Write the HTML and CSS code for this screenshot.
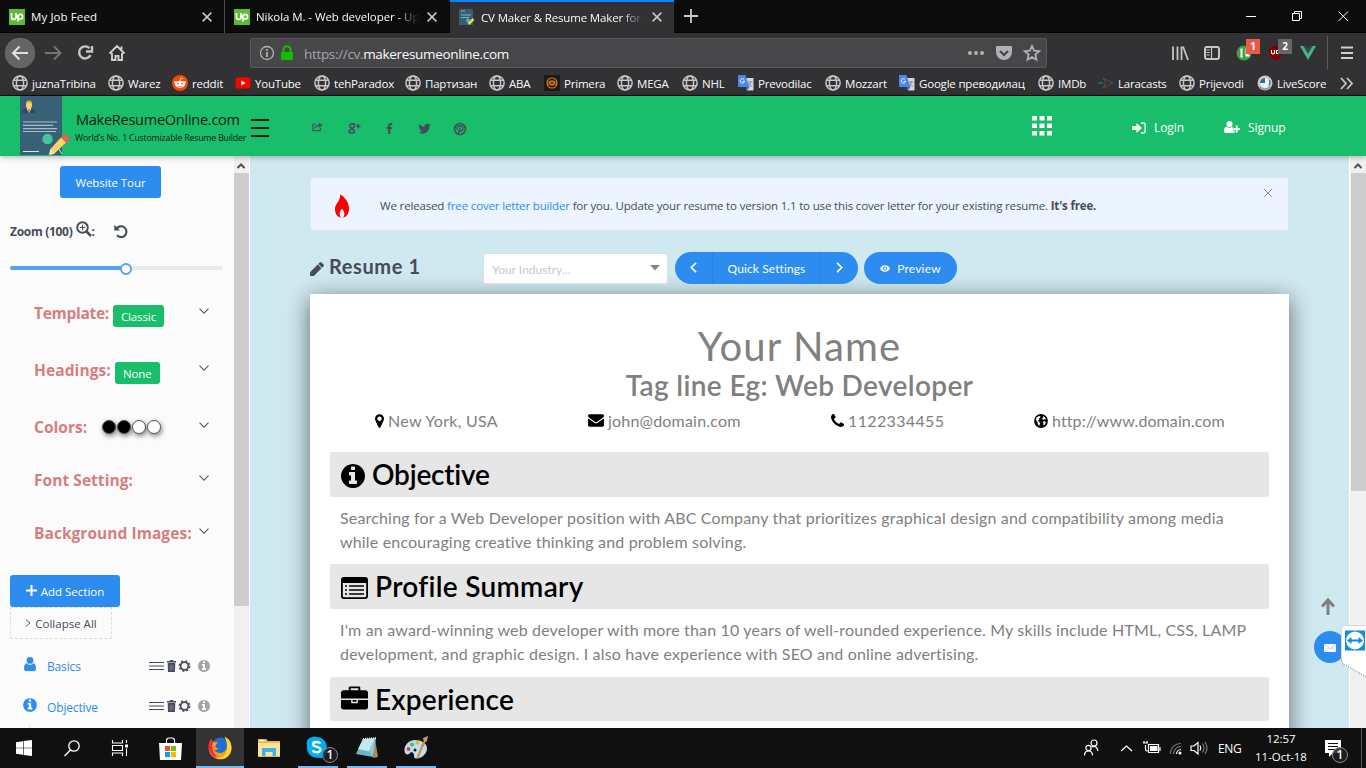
FILE: index.html
```html
<!DOCTYPE html>
<html lang="en">
<head>
<meta charset="utf-8">
<title>CV Maker &amp; Resume Maker</title>
<link rel="stylesheet" href="styles.css">
</head>
<body>
<svg class="defs" width="0" height="0">
  <symbol id="globe" viewBox="0 0 16 16"><g fill="none" stroke="#c6c6c7" stroke-width="1.5"><circle cx="8" cy="8" r="7.1"/><ellipse cx="8" cy="8" rx="3.6" ry="7.1"/><path d="M1.6 5.3h12.8M1.6 10.7h12.8"/></g></symbol>
  <symbol id="upwork" viewBox="0 0 16 16"><path fill="#5bbc2f" d="M0 0h16v16H0z"/><path d="M2.5 4v4.2a2.2 2.2 0 0 0 4.4 0V4M6.9 5c.5 2 1.300 3.200 2.300 4.500M9 12.500V7.600a2.300 2.300 0 1 1 2.300 2.400c-1 0-1.700-.3-2.300-1" fill="none" stroke="#fff" stroke-width="1.700"/></symbol>
  <symbol id="close" viewBox="0 0 10 10"><path d="M.6.6l8.800 8.800M9.400.6L.6 9.400" stroke="#c9c9ca" stroke-width="1.500"/></symbol>
  <symbol id="translate" viewBox="0 0 16 16"><path fill="#d5d7da" d="M6 3h9.500v12.500H9z"/><path fill="#4a86f0" d="M0 0h7.500l4 12H0z"/><path fill="#3467d6" d="M8 12h3.500L9 15.500z"/><path d="M6.200 4.600a2.200 2.200 0 1 0 .4 1.800H4.600" stroke="#fff" fill="none"/><path d="M10 7h4.500M12.300 6v1c0 2-1 3.500-2 4.500M11 8.500c.8 1.500 1.700 2.500 3 3" stroke="#7c8a94" fill="none" stroke-width=".9"/></symbol>
  <symbol id="info" viewBox="0 0 1792 1792"><path d="M1152 1376v-160q0-14-9-23t-23-9h-96v-512q0-14-9-23t-23-9h-320q-14 0-23 9t-9 23v160q0 14 9 23t23 9h96v320h-96q-14 0-23 9t-9 23v160q0 14 9 23t23 9h448q14 0 23-9t9-23zm-128-896v-160q0-14-9-23t-23-9h-192q-14 0-23 9t-9 23v160q0 14 9 23t23 9h192q14 0 23-9t9-23zm640 416q0 209-103 385.500t-279.500 279.500-385.500 103-385.500-103-279.500-279.500-103-385.500 103-385.500 279.500-279.500 385.500-103 385.500 103 279.500 279.500 103 385.500z"/></symbol>
  <symbol id="chev" viewBox="0 0 10 6"><path d="M.5.7L5 5.200 9.500.7" fill="none" stroke="#515a6e" stroke-width="1.100"/></symbol>
  <symbol id="user" viewBox="0 0 12 14"><circle cx="6" cy="3.400" r="3.400"/><path d="M2.600 6.200C.8 6.600 0 8.500 0 11.400 0 13 .9 14 2.300 14h7.400c1.400 0 2.300-1 2.300-2.600 0-2.900-.8-4.800-2.600-5.200C8.400 7.200 7.300 7.700 6 7.700S3.600 7.200 2.600 6.200z"/></symbol>
  <symbol id="tools" viewBox="0 0 42 12"><path d="M0 2.500h15M0 6h15M0 9.500h15" stroke="#464c5b"/><path fill="#464c5b" d="M18 2V1h2.500l.5-1h3l.5 1H27v1.600h-9zM18.700 3h7.600l-.4 9H19z"/><path d="M21 4.500v6M22.500 4.500v6M24 4.500v6" stroke="#8c909a" stroke-width=".6"/><circle cx="35.500" cy="6" r="3.900" fill="none" stroke="#464c5b" stroke-width="1.800"/><circle cx="35.500" cy="6" r="5.200" fill="none" stroke="#464c5b" stroke-width="1.400" stroke-dasharray="2 2.080"/></symbol>
</svg>

<header class="browser">
  <div class="tabs">
    <div class="tab"><svg class="fav"><use href="#upwork"/></svg><span class="tt t1">My Job Feed</span><svg class="x"><use href="#close"/></svg></div>
    <div class="tab"><svg class="fav"><use href="#upwork"/></svg><span class="tt t2">Nikola M. - Web developer - Up</span><svg class="x"><use href="#close"/></svg></div>
    <div class="tab active"><svg class="fav" viewBox="0 0 16 16"><path fill="#336079" d="M0 0h14v16H0z"/><path d="M2 2h4M2 6h10M2 8.500h8" stroke="#8fa7b5"/><circle cx="9" cy="11.500" r="2" fill="#3fc0a0"/><path d="M9.500 15l5-5" stroke="#fccf55" stroke-width="2.500"/></svg><span class="tt t3">CV Maker &amp; Resume Maker for</span><svg class="x"><use href="#close"/></svg></div>
    <svg class="plus" viewBox="0 0 14 14"><path d="M7 0v14M0 7h14" stroke="#c9c9ca" stroke-width="1.800"/></svg>
    <svg class="winbtns" viewBox="0 0 104 12"><g fill="none" stroke="#fff"><path d="M0 6.500h10M46.500 3.500h7v7h-7zM48.500 3.500v-2h7v7h-2M92.500 1.500l9.500 9.500M102 1.500L92.500 11"/></g></svg>
  </div>
  <div class="toolbar">
    <svg class="nav" viewBox="0 0 130 34"><circle cx="20" cy="17" r="16" fill="#656566" stroke="#2a2a2c"/><g fill="none" stroke-width="2"><path d="M28 17H13.500M19.500 10.500L13 17l6.500 6.500" stroke="#e1e1e2"/><path d="M45 17h14.500M54 10.500l6.500 6.500-6.500 6.500" stroke="#747476"/><path d="M89.500 12.300a6 6 0 1 0 1 6.800M92 10v5.500h-6" stroke="#c6c6c7" stroke-width="2.400"/><path d="M109.500 17.500L117 10l7.500 7.500M112 17v7h3.500v-4h3v4h3.500v-7M121.500 10.500v3" stroke="#d0d0d1" stroke-width="1.900"/></g></svg>
    <div class="url">
      <svg class="lock" viewBox="0 0 36 16"><circle cx="8" cy="8" r="6.500" fill="none" stroke="#b1b1b3" stroke-width="1.300"/><path d="M8 7v5M8 4v1.700" stroke="#b1b1b3" stroke-width="1.700"/><path fill="#12bc00" d="M22 7h12v8H22z"/><path d="M24.500 8V4.700a3.500 3.500 0 0 1 7 0V8" fill="none" stroke="#12bc00" stroke-width="2"/></svg>
      <span class="addr"><i>https://cv.</i>makeresumeonline.com</span>
      <svg class="acts" viewBox="0 0 74 18"><g fill="#b1b1b3"><circle cx="3" cy="9" r="2"/><circle cx="9" cy="9" r="2"/><circle cx="15" cy="9" r="2"/><path d="M30 2h14q1 0 1 1v5a8 8 0 0 1-16 0V3q0-1 1-1z"/></g><path d="M33 7l4 4 4-4" stroke="#474749" stroke-width="2.200" fill="none"/><path d="M65 2l2.100 4.700 5.100.5-3.800 3.400 1.100 5.100L65 13l-4.500 2.700 1.100-5.100-3.800-3.400 5.100-.5z" fill="none" stroke="#b1b1b3" stroke-width="1.800"/></svg>
    </div>
    <svg class="ext" viewBox="0 0 190 34"><g stroke="#c6c6c7" fill="none"><path d="M2 10.500V24M6.500 10.500V24M10.500 10.500V24M12 10.500L17 24" stroke-width="1.800"/><rect x="34" y="11" width="14" height="12" rx="2" stroke-width="2"/><path d="M40.500 11v12M35.500 14h3M35.500 16.500h3M35.500 19h3" stroke-width="1.200"/></g><circle cx="73" cy="17" r="7.500" fill="#43a047"/><path d="M70.500 12.500v9M75.500 12.500v7h3" stroke="#fff" stroke-width="2" fill="none"/><path d="M98 12l6.500-2.500L111 12v5c0 3-3 5.500-6.500 7.500C101 22.500 98 20 98 17z" fill="#800000"/><path d="M100.500 14v3q1.500 2 3 0v-3M108 14.500h-2.500v3H108" stroke="#fff" fill="none" stroke-width="1.100"/><path d="M129 10h3.500l4.500 7.500 4.500-7.500h3.500L137 24z" fill="#41b883"/><path d="M132.500 10h3l1.500 3 1.500-3h3L137 17.500z" fill="#35495e"/><path d="M156.500 0v34" stroke="#5a5a5c"/><path d="M170 11.500h12M170 17h12M170 22h12" stroke="#d0d0d1" stroke-width="2"/></svg>
    <b class="bdg red">1</b><b class="bdg gray">2</b>
  </div>
  <nav class="marks">
    <a><svg><use href="#globe"/></svg>juznaTribina</a>
    <a><svg><use href="#globe"/></svg>Warez</a>
    <a><svg viewBox="0 0 16 16"><circle cx="8" cy="8" r="8" fill="#ff4500"/><ellipse cx="8" cy="9.300" rx="5" ry="3.600" fill="#fff"/><circle cx="3.500" cy="7.500" r="1.400" fill="#fff"/><circle cx="12.500" cy="7.500" r="1.400" fill="#fff"/><circle cx="6" cy="8.600" r=".9" fill="#ff4500"/><circle cx="10" cy="8.600" r=".9" fill="#ff4500"/><path d="M6 11q2 1.200 4 0" stroke="#ff4500" fill="none" stroke-width=".7"/><path d="M8 6l.7-3 2.500.6" stroke="#fff" fill="none" stroke-width=".8"/></svg>reddit</a>
    <a><svg viewBox="0 0 16 16"><rect x=".5" y="2.500" width="15" height="11" rx="2.500" fill="#f00"/><path fill="#fff" d="M6.300 5.500v5l4.200-2.500z"/></svg>YouTube</a>
    <a><svg><use href="#globe"/></svg>tehParadox</a>
    <a><svg><use href="#globe"/></svg>Партизан</a>
    <a><svg><use href="#globe"/></svg>ABA</a>
    <a><svg viewBox="0 0 16 16"><path fill="#1b1b1c" d="M0 0h16v16H0z"/><g fill="none" stroke="#e07b15" stroke-width="1.100"><circle cx="8" cy="8" r="5"/><circle cx="8" cy="8" r="2.200"/><path d="M3 7h10M3 9.300h10"/></g></svg>Primera</a>
    <a><svg><use href="#globe"/></svg>MEGA</a>
    <a><svg><use href="#globe"/></svg>NHL</a>
    <a><svg><use href="#translate"/></svg>Prevodilac</a>
    <a><svg><use href="#globe"/></svg>Mozzart</a>
    <a><svg><use href="#translate"/></svg>Google преводилац</a>
    <a><svg><use href="#globe"/></svg>IMDb</a>
    <a><svg viewBox="0 0 16 16"><path d="M0 8h5" stroke="#14746f" stroke-width="1.500"/><path d="M5 3l10 5-10 5 3-5z" fill="none" stroke="#515153"/></svg>Laracasts</a>
    <a><svg><use href="#globe"/></svg>Prijevodi</a>
    <a><svg viewBox="0 0 16 16"><circle cx="8" cy="8" r="7.500" fill="#c3c8ca"/><circle cx="8" cy="8" r="5" fill="#eef1f2"/><path fill="#2d6f97" d="M8 8V3a5 5 0 0 0-5 5z"/><path d="M3 12a6.500 6.500 0 0 0 10.500-1" stroke="#777" fill="none"/><path d="M12.500 5q1 3-.5 5.500" stroke="#3a7fa5" fill="none" stroke-width="1.500"/></svg>LiveScore</a>
    <svg class="more" viewBox="0 0 13 13"><path d="M1 1l5 5.500L1 12M7 1l5 5.500L7 12" stroke="#c6c6c7" stroke-width="1.800" fill="none"/></svg>
  </nav>
</header>

<div class="sitebar">
  <svg class="logo" viewBox="0 0 52 60"><path fill="#386178" d="M0 0h42v59H0z"/><path fill="#2b4c62" d="M2 17c0-4 3-5 6.500-5s6.500 1 6.500 5z"/><ellipse cx="9" cy="9" rx="3" ry="4" fill="#fcd462"/><path d="M6 8q-.5-3.500 3-3.500T12 8L9 6.500z" fill="#e8a63c"/><path d="M6.500 12.500l2.500 4.500 2.500-4.500z" fill="#e3dfd0"/><path d="M9 13l-1 1 1 3 1-3z" fill="#d9534f"/><path d="M3 26h34M3 29.300h30M3 32.600h34M3 35.500h33" stroke="#a9bcc7" stroke-width="1.200"/><circle cx="27.500" cy="43" r="5.200" fill="#44c4a1"/><path d="M3 55.500h16" stroke="#dfe6ea"/><path d="M29 59l1.500-6L41 41.500l5 5L34 58z" fill="#fcd462"/><path d="M41 41.500l3.500-4 6 5.500-4 4z" fill="#e56353"/><path d="M29 59l1.500-6 4 4.500z" fill="#f3e4c4"/><path d="M38 52l4 6" stroke="#d9e2e6"/></svg>
  <div class="brand"><b>MakeResumeOnline.com</b><small>World's No. 1 Customizable Resume Builder</small></div>
  <svg class="burger" viewBox="0 0 18 18"><path d="M0 1h18M0 9h18M0 17h18" stroke="#0b1a12" stroke-width="2"/></svg>
  <div class="social">
    <svg viewBox="0 0 12 12"><path d="M4 3H1v7h8V7M3.500 7.500Q4 4 8.500 4" fill="none" stroke="#464c5b" stroke-width="1.300"/><path fill="#464c5b" d="M7.500 1L11.500 4 7.500 7z"/></svg>
    <svg viewBox="0 0 14 12"><g fill="none" stroke="#464c5b" stroke-width="1.600"><ellipse cx="4.300" cy="3.200" rx="2.500" ry="2.200"/><ellipse cx="4" cy="9" rx="3" ry="2"/><path d="M4.500 1H8M4 5.500l2 2M8.500 3.500h5M11 1v5"/></g></svg>
    <svg viewBox="0 0 7 12"><path fill="#464c5b" d="M2 12V6.500H.3V4.300H2V3C2 1 3.200 0 4.800 0h1.700v2.200H5.300c-.7 0-.9.400-.9 1v1.100h2.100L6.200 6.500H4.400V12z"/></svg>
    <svg viewBox="60 200 1660 1350"><path fill="#464c5b" d="M1684 408q-67 98-162 167 1 14 1 42 0 130-38 259.500t-115.500 248.500-184.500 210.500-258 146-323 54.500q-271 0-496-145 35 4 78 4 225 0 401-138-105-2-188-64.500t-114-159.500q33 5 61 5 43 0 85-11-112-23-185.500-111.500t-73.500-205.500v-4q68 38 146 41-66-44-105-115t-39-154q0-88 44-163 121 149 294.500 238.500t371.500 99.500q-8-38-8-74 0-134 94.500-228.500t228.500-94.500q140 0 236 102 109-21 205-78-37 115-142 178 93-10 186-50z"/></svg>
    <svg viewBox="0 0 14 14"><g fill="none" stroke="#464c5b" stroke-width="1.700"><circle cx="7" cy="7" r="5.500"/><path d="M5.200 12.300L7.200 5.500M4.600 8C3 5.500 5 3.700 7.200 3.700c2.300 0 3.200 1.600 2.700 3.300-.5 2.200-2.700 2.600-3.300 1.300" stroke-width="1.400"/></g></svg>
  </div>
  <svg class="apps" viewBox="0 0 20 20"><path fill="#fff" d="M0 0h5v4.500H0zM7.500 0h5v4.500h-5zM15 0h5v4.500h-5zM0 7.500h5V12H0zM7.500 7.500h5V12h-5zM15 7.500h5V12h-5zM0 15h5v4.500H0zM7.500 15h5v4.500h-5zM15 15h5v4.500h-5z"/></svg>
  <a class="login"><svg viewBox="0 0 14 12"><path fill="#fff" d="M0 4h4.500V1L9.800 6l-5.300 5V8H0z"/><path d="M9 1h2.500Q13.200 1 13.200 2.700v6.600Q13.200 11 11.500 11H9" fill="none" stroke="#fff" stroke-width="1.400"/></svg>Login</a>
  <a class="signup"><svg viewBox="0 0 16 12"><g fill="#fff"><circle cx="5.500" cy="3" r="3"/><path d="M2.500 5.500C.8 6 0 7.500 0 9.700 0 11.200.8 12 2 12h7.500q1.200 0 1.200-.8V9.500H9V7q-.2-1-1-1.500Q7 6.700 5.500 6.700t-3-1.200z"/></g><path d="M12.700 4.500v7M9.500 8h6.500" stroke="#fff" stroke-width="1.900"/></svg>Signup</a>
</div>

<div class="body">
  <aside class="side">
    <div class="btn tour">Website Tour</div>
    <div class="zoom"><b>Zoom (100)</b><svg class="mag" viewBox="0 0 16 16"><circle cx="6.500" cy="6.500" r="5.300" fill="none" stroke="#464c5b" stroke-width="1.900"/><path d="M10.500 10.500l4.500 4.500" stroke="#464c5b" stroke-width="2.500"/><path d="M6.500 3.700v5.600M3.700 6.500h5.600" stroke="#464c5b"/></svg><b>:</b><svg class="undo" viewBox="0 0 14 14"><path d="M2.500 4.800A5.400 5.400 0 1 1 3 11.300" fill="none" stroke="#464c5b" stroke-width="2.100"/><path fill="#464c5b" d="M.3.800v5.700H6z"/></svg></div>
    <div class="slider"><div class="fill"></div><div class="knob"></div></div>
    <div class="opt o1"><h4>Template:</h4><span class="tag">Classic</span><svg class="dn"><use href="#chev"/></svg></div>
    <div class="opt o2"><h4>Headings:</h4><span class="tag">None</span><svg class="dn"><use href="#chev"/></svg></div>
    <div class="opt o3"><h4>Colors:</h4><span class="dots"><i></i><i></i><i class="w"></i><i class="w"></i></span><svg class="dn"><use href="#chev"/></svg></div>
    <div class="opt o4"><h4>Font Setting:</h4><svg class="dn"><use href="#chev"/></svg></div>
    <div class="opt o5"><h4>Background Images:</h4><svg class="dn"><use href="#chev"/></svg></div>
    <div class="btn add"><svg viewBox="0 0 11 11"><path d="M5.500 0v11M0 5.500h11" stroke="#fff" stroke-width="2"/></svg>Add Section</div>
    <div class="collapse"><svg viewBox="0 0 6 8"><path d="M.8.500L5 4 .8 7.500" fill="none" stroke="#515a6e"/></svg>Collapse All</div>
    <div class="sec first"><svg class="ic u"><use href="#user"/></svg><span>Basics</span><svg class="tools"><use href="#tools"/></svg><svg class="gi"><use href="#info"/></svg></div>
    <div class="sec"><svg class="ic"><use href="#info"/></svg><span>Objective</span><svg class="tools"><use href="#tools"/></svg><svg class="gi"><use href="#info"/></svg></div>
    <div class="tail"></div>
  </aside>
  <div class="scroll s-left"><svg viewBox="0 0 8 6"><path d="M.5 5L4 1.500 7.500 5" fill="none" stroke="#505050" stroke-width="2"/></svg><div class="thumb"></div></div>

  <main class="content">
    <div class="notice">
      <svg class="fire" viewBox="0 0 15 25"><path fill="#f00" d="M5.700 0C11 3.500 15 9 15 15.500c0 5-2.500 9-7 9.500 1.700-1 2-2.500 2-4 0-2.500-1.200-4-2.500-5.500C6 17 5 18.500 5 21c0 1.500.5 3 2 4-4.500-.5-7-4-7-9.500C0 10.500 5.500 8 5.700 0z"/></svg>
      <p>We released <a>free cover letter builder</a> for you. Update your resume to version 1.1 to use this cover letter for your existing resume. <b>It's free.</b></p>
      <svg class="nx" viewBox="0 0 10 10"><path d="M1 1l8 8M9 1L1 9" stroke="#8a919c"/></svg>
    </div>
    <div class="bar">
      <svg class="pen" viewBox="120 256 1530 1410"><path fill="#464c5b" d="M960 416l416 416-832 832h-416v-416zM1643 512q0 53-37 90l-166 166-416-416 166-165q36-38 90-38 53 0 91 38l235 234q37 39 37 91z"/></svg>
      <h2>Resume 1</h2>
      <div class="select"><span>Your Industry...</span><svg viewBox="0 0 10 6"><path fill="#808695" d="M0 0h10L5 5.500z"/></svg></div>
      <div class="group"><span class="g1"><svg viewBox="0 0 7 11"><path d="M6 .8L1.300 5.500 6 10.200" fill="none" stroke="#fff" stroke-width="1.700"/></svg></span><span class="g2">Quick Settings</span><span class="g1"><svg viewBox="0 0 7 11"><path d="M1 .8l4.700 4.700L1 10.200" fill="none" stroke="#fff" stroke-width="1.700"/></svg></span></div>
      <div class="preview"><svg viewBox="0 0 11 7"><path fill="#fff" fill-rule="evenodd" d="M0 3.500Q2 0 5.500 0T11 3.500Q9 7 5.500 7T0 3.500zm3.200 0a2.300 2.300 0 1 0 4.600 0 2.300 2.300 0 1 0-4.600 0z"/><circle cx="5.500" cy="3.500" r="1.200" fill="#fff"/></svg>Preview</div>
    </div>
    <article class="paper">
      <h1>Your Name</h1>
      <h3>Tag line Eg: Web Developer</h3>
      <div class="contacts">
        <span class="c1"><svg viewBox="384 128 1024 1536"><path d="M1152 640q0-106-75-181t-181-75-181 75-75 181 75 181 181 75 181-75 75-181zm256 0q0 109-33 179l-364 774q-16 33-47.500 52t-67.500 19-67.500-19-46.500-52l-365-774q-33-70-33-179 0-212 150-362t362-150 362 150 150 362z"/></svg><em>New York, USA</em></span>
        <span class="c2"><svg viewBox="0 256 1792 1408"><path d="M1792 710v794q0 66-47 113t-113 47h-1472q-66 0-113-47t-47-113v-794q44 49 101 87 362 246 497 345 57 42 92.500 65.500t94.500 48 110 24.500h2q51 0 110-24.500t94.500-48 92.500-65.500q170-123 498-345 57-39 100-87zm0-294q0 79-49 151t-122 123q-376 261-468 325-10 7-42.500 31t-54 38.500-52 32.500-57.500 27-50 9h-2q-23 0-50-9t-57.500-27-52-32.500-54-38.500-42.500-31q-91-64-262-182.500t-205-142.500q-62-42-117-115.500t-55-136.500q0-78 41.500-130t118.500-52h1472q65 0 112.500 47t47.500 113z"/></svg><em>john@domain.com</em></span>
        <span class="c3"><svg viewBox="192 128 1408 1408"><path d="M1600 1240q0 27-10 70.500t-21 68.500q-21 50-122 106-94 51-186 51-27 0-53-3.500t-57.500-12.500-47-14.500-55.500-20.500-49-18q-98-35-175-83-127-79-264-216t-216-264q-48-77-83-175-3-9-18-49t-20.500-55.500-14.500-47-12.500-57.500-3.500-53q0-92 51-186 56-101 106-122 25-11 68.500-21t70.500-10q14 0 21 3 18 6 53 76 11 19 30 54t35 63.500 31 53.500q3 4 17.500 25t21.500 35.500 7 28.500q0 20-28.500 50t-62 55-62 53-28.500 46q0 9 5 22.500t8.500 20.500 14 24 11.500 19q76 137 174 235t235 174q2 1 19 11.500t24 14 20.500 8.500 22.500 5q18 0 46-28.500t53-62 55-62 50-28.500q14 0 28.500 7t35.500 21.500 25 17.500q25 15 53.500 31t63.500 35 54 30q70 35 76 53 3 7 3 21z"/></svg><em>1122334455</em></span>
        <span class="c4"><svg viewBox="0 0 14 14"><circle cx="7" cy="7" r="6.900"/><path fill="#fff" d="M2.500 3.500L5 2l1.500.5L6 4l-1.200.5.500 1-1.300 1 1.500 1.500.5 1.500-.8 2.500L3.700 10l-.2-2L2 6zM9 2l2 1.200 1 2.300-1.500-.2-1.500.5L8 4.500l1.200-.8zM9 7.500l2-.3.8 1.300-1 2.200-1.300.8-.2-2z"/></svg><em>http://www.domain.com</em></span>
      </div>
      <div class="head"><svg class="hi"><use href="#info"/></svg><span class="k1">Objective</span></div>
      <p class="txt"><span>Searching for a Web Developer position with ABC Company that prioritizes graphical design and compatibility among media</span><span>while encouraging creative thinking and problem solving.</span></p>
      <div class="head"><svg class="list" viewBox="0 0 27 22"><rect x=".9" y=".9" width="25.200" height="20.200" rx="2" fill="none" stroke="#000" stroke-width="1.800"/><path d="M1 1h25v5H1z"/><path d="M4 9h2M8 9h15M4 13h2M8 13h15M4 17h2M8 17h15" stroke="#000" stroke-width="1.600"/></svg><span class="k2">Profile Summary</span></div>
      <p class="txt"><span>I'm an award-winning web developer with more than 10 years of well-rounded experience. My skills include HTML, CSS, LAMP</span><span>development, and graphic design. I also have experience with SEO and online advertising.</span></p>
      <div class="head last"><svg class="case" viewBox="0 0 1792 1536"><path d="M640 256h512v-128h-512v128zm1152 640v480q0 66-47 113t-113 47h-1472q-66 0-113-47t-47-113v-480h672v160q0 26 19 45t45 19h320q26 0 45-19t19-45v-160h672zm-768 0v128h-256v-128h256zm768-480v384h-1792v-384q0-66 47-113t113-47h352v-160q0-40 28-68t68-28h576q40 0 68 28t28 68v160h352q66 0 113 47t47 113z"/></svg><span class="k3">Experience</span></div>
    </article>
  </main>
  <div class="scroll s-right"><svg viewBox="0 0 8 6"><path d="M.5 5L4 1.500 7.500 5" fill="none" stroke="#505050" stroke-width="2"/></svg><div class="thumb"></div></div>
</div>

<svg class="totop" viewBox="0 0 14 18"><path d="M7 17V3M1 8.500l6-6.500 6 6.500" fill="none" stroke="#808080" stroke-width="3"/></svg>
<div class="chat"><svg viewBox="0 0 12 8"><path fill="#fff" d="M0 0h12v8H0z"/><path d="M.5.500L6 5 11.500.500M.5 7.500l4-3.500M11.500 7.500l-4-3.500" fill="none" stroke="#9fc4ee" stroke-width=".8"/></svg></div>
<svg class="viewer" viewBox="0 0 25 52"><path d="M25 .5H4Q.5.500.5 4v33l4 4L25 52z" fill="#fff"/><path d="M25 .5H4Q.5.500.5 4v31" fill="none" stroke="#d5d8da"/><path d="M.5 35q0 4 4 5L25 52" fill="none" stroke="#555" stroke-dasharray="1 1.500"/><rect x="4" y="5.500" width="20" height="20" fill="#0e8ee9"/><circle cx="14" cy="15.500" r="9" fill="#fff"/><path fill="#0e8ee9" d="M6 15.500l4.500-3.500v2.500h7V12l4.500 3.500-4.500 3.500v-2.500h-7V19z"/></svg>

<footer class="taskbar">
  <span class="tk"><svg width="16" height="16" viewBox="0 0 16 16"><path fill="#fff" d="M0 2.300L7 1.200v6.500H0zM7.600 1.100L16 0v7.700H7.600zM0 8.300h7v6.500l-7-1zM7.600 8.300H16V16l-8.400-1.100z"/></svg></span>
  <span class="tk"><svg width="16" height="17" viewBox="0 0 16 17"><circle cx="10" cy="6" r="5.200" fill="none" stroke="#fff" stroke-width="1.300"/><path d="M6.500 10L.5 16" stroke="#fff" stroke-width="1.500"/></svg></span>
  <span class="tk"><svg width="16" height="16" viewBox="0 0 16 16"><path d="M.5 0v3h10V0M.5 16v-3h10v3M.5 5.500h10v5H.5zM14.500 0v3M14.500 8.500V16" fill="none" stroke="#fff" stroke-width="1.100"/><path fill="#fff" d="M13 4.500h3v3h-3z"/></svg></span>
  <span class="tk tw"><svg width="23" height="23" viewBox="0 0 23 23"><path d="M7.500 7V3.500Q7.500 1 10 1h3q2.500 0 2.500 2.500V7" fill="none" stroke="#fff" stroke-width="1.200"/><path fill="#fff" d="M0 6h23l-1 17H1z"/><path fill="#f25022" d="M6 9h5v5H6z"/><path fill="#7fba00" d="M12 9h5v5h-5z"/><path fill="#00a4ef" d="M6 15h5v5H6z"/><path fill="#ffb900" d="M12 15h5v5h-5z"/></svg></span>
  <span class="tk run on"><svg width="24" height="24" viewBox="0 0 24 24"><path fill="#ff5a36" d="M3 3q1 2 3 2.500Q9 2 12 2l10 4q3 7 0 12-4 5.500-10 5.500T2 18Q-1.500 10 3 3z"/><circle cx="12.500" cy="9.500" r="8" fill="#1b6fd6"/><path fill="#ffd62b" d="M16.500.5q7 3.500 7 11 0 8-7 11-5 1.500-9-1 8 0 10.500-6Q20.500 8 16.500.5z"/><path fill="#f5263f" d="M3 3q1 2 3 2.500l4 1-2.500 3Q7 12 10 12.500 8 14.500 6 14q2 4 7 3.500-3 4-8 2Q-2 12.500 3 3z"/><path fill="#ff9a1f" d="M5 6l5 .5-2.500 3Q7 12 10.500 12.500 8.500 14.500 6 14q2.500 3.500 7 3 4.500-1 5.500-5 .5 7-6 9-6-.5-8-7-1-5 .5-8z"/></svg></span>
  <span class="tk"><svg width="22" height="20" viewBox="0 0 22 20"><path fill="#e8b849" d="M0 1h8l2 2h12v16H0z"/><path fill="#fde397" d="M0 5h22v13H0z"/><path fill="#3db2e8" d="M4 10h14v8h-3.500v-4h-7v4H4z"/><path fill="#fff" d="M1.500 2h5v1.200h-5z"/></svg></span>
  <span class="tk run"><svg class="skype" width="32" height="28" viewBox="0 0 32 28"><path fill="#00aff0" d="M7 1a6 6 0 0 1 5 0 10 10 0 0 1 9.500 12A6 6 0 0 1 14 21.500 10 10 0 0 1 2 10Q0 3 7 1z"/><path d="M15.500 7.500Q14 6 11.500 6 8 6 8 8.300c0 3.200 7.500 1.700 7.500 5 0 2.500-2 3-4 3Q9 16.300 7.500 14.500" fill="none" stroke="#fff" stroke-width="2.300"/></svg><b class="cnt c-sk">1</b></span>
  <span class="tk run"><svg width="24" height="24" viewBox="0 0 24 24"><path fill="#b5854b" d="M20 3l3 18-5 1z"/><path fill="#6fb4c4" d="M8 3l13-1-3 19L1 18z"/><path fill="#c3e8ee" d="M8 3l12-.7-6 13L3 13z"/><path fill="#8fc9d4" d="M20 2.300L18 21l-4-6z"/><path d="M8 3l13-1" stroke="#ddd" stroke-dasharray="1 1" stroke-width="2"/></svg></span>
  <span class="tk run"><svg width="24" height="24" viewBox="0 0 24 24"><path fill="#b9dff5" d="M11 4C5 4 0 9 .5 15c.5 4 4 4 5 2.500s3-2 4 0S9 22 12 22.500c6 0 11-5 11-10C23 7 17 4 11 4z"/><circle cx="4.500" cy="13" r="1.900" fill="#e33b2e"/><circle cx="8" cy="8.500" r="2" fill="#55b948"/><circle cx="13.500" cy="6.500" r="2.100" fill="#f7b51c"/><circle cx="19" cy="9" r="1.500" fill="#6f94d8"/><circle cx="11" cy="14" r="1.500" fill="#122"/><path d="M13.500 22L20 6" stroke="#e58a2c" stroke-width="2"/><path d="M20 7l-1-5 5-2-1 5z" fill="#c79868"/></svg></span>
  <div class="tray">
    <svg viewBox="0 0 124 20"><g fill="none" stroke="#fff" stroke-width="1.200"><circle cx="10" cy="5" r="3"/><circle cx="4.500" cy="10" r="2.600"/><path d="M.5 17.500q0-4.500 4-4.500t4 4.500M7.500 9q5-2.500 6.500 4"/><path d="M37 13l5.500-5L48 13"/><path d="M64.500 6.500h10v8h-10zM76 9v4M59 5h5M60 3v2M63 3v2M61.500 7v4q0 2 2 2"/></g><path fill="#fff" d="M66 8h7.500v5H66z"/><g fill="none" stroke="#77777a" stroke-width="1.200"><path d="M86.500 16A10 10 0 0 1 97 5.500M89.500 16A7.500 7.500 0 0 1 97 8.500"/><path stroke="#fff" d="M92.500 16a4.700 4.700 0 0 1 4.500-4.500"/><path stroke="#fff" d="M107 8v4.500h3l4 3.500V4.500L110 8zM116 7.500q1.500 2.500 0 5"/><path d="M118.500 5.500q3 4.500 0 9M121 4q4 6 0 12"/></g><circle cx="96" cy="15" r="1.500" fill="#fff"/></svg>
    <span class="lang">ENG</span>
    <div class="clock"><span>12:57</span><span>11-Oct-18</span></div>
    <span class="act"><svg viewBox="0 0 16 17"><path fill="#fff" d="M0 0h16v13H8l-4 4v-4H0z"/><path d="M3 3.500h10M3 6.500h10M3 9.500h7" stroke="#101010"/></svg><b class="cnt c-ac">1</b></span>
    <i class="peek"></i>
  </div>
</footer>
</body>
</html>
```
FILE: styles.css
```css
* { box-sizing: border-box; }
body { margin: 0; width: 1366px; height: 768px; overflow: hidden; position: relative; display: flex; flex-direction: column; font-family: "Open Sans", "Noto Sans", sans-serif; font-size: 12px; color: #464c5b; }
svg { display: block; flex: none; overflow: visible; }
.defs { position: absolute; }
h1, h2, h3, h4, p { margin: 0; font-weight: 400; }
i, em { font-style: normal; }
span, a, h1, h2, h3, h4 { white-space: nowrap; }

/* browser window */
.browser { height: 96px; flex: none; background: #323234; color: #f9f9fa; border-bottom: 1px solid #0c0c0d; }
.tabs { height: 33px; display: flex; background: #0c0c0d; position: relative; align-items: center; border-bottom: 1px solid #050505; }
.tab { width: 225px; height: 33px; display: flex; align-items: center; padding: 1px 12px 0 9px; border-right: 1px solid #4a4a4c; }
.tab:nth-child(2) { border-right-color: #0c0c0d; }
.tab.active { background: #323234; border-top: 2px solid #0a84ff; border-right: 0; width: 224px; padding-top: 0; }
.fav { width: 16px; height: 16px; margin-right: 6px; }
.tt { flex: 1; overflow: hidden; font-size: 11.500px; margin-right: 8px; }
.t1 { letter-spacing: 0.1px; }
.t2, .t3 { letter-spacing: -0.08px; -webkit-mask-image: linear-gradient(90deg, #000 86%, transparent); mask-image: linear-gradient(90deg, #000 86%, transparent); }
.t3 { letter-spacing: -0.15px; }
.x { width: 10px; height: 10px; }
.plus { width: 14px; height: 14px; margin-left: 10px; }
.winbtns { width: 104px; height: 12px; margin-left: auto; margin-right: 16px; }
.toolbar { height: 39px; display: flex; align-items: center; position: relative; }
.nav { width: 130px; height: 34px; margin-right: 120px; }
.url { width: 797px; height: 30px; border: 1px solid #58585a; border-radius: 2px; background: #474749; display: flex; align-items: center; padding: 0 5px 0 8px; }
.lock { width: 36px; height: 16px; margin-right: 9px; }
.addr { flex: 1; font-size: 13.500px; letter-spacing: -0.33px; padding-top: 2px; }
.addr i { color: #a5a5a8; }
.acts { width: 74px; height: 18px; }
.ext { width: 190px; height: 34px; margin-left: 124px; }
.bdg { position: absolute; width: 14px; height: 15px; top: 6px; font: bold 10px/15px "Open Sans", sans-serif; text-align: center; color: #fff; }
.red { left: 1246px; background: #e75a46; }
.gray { left: 1278px; background: #67676a; }
.marks { height: 22px; padding-left: 12px; display: grid; grid-template-columns: 96px 64px 63px 79px 91px 84px 55px 73px 65px 56px 87px 74px 139px 60px 81px 78px 83px 13px; align-items: center; font-size: 11.500px; letter-spacing: -0.2px; }
.marks a { display: flex; align-items: center; gap: 4px; }
.marks a svg { width: 16px; height: 16px; }
.marks .more { width: 13px; height: 13px; }

/* site header */
.sitebar { height: 60px; flex: none; background: #19be6b; display: flex; align-items: center; position: relative; z-index: 2; box-shadow: 0 1px 6px rgba(0,0,0,.3); padding-left: 20px; }
.logo { width: 52px; height: 60px; }
.brand { margin-left: 3px; width: 176px; color: #0b1a12; display: flex; flex-direction: column; margin-top: 2px; }
.brand b { font-weight: 400; font-size: 14.500px; line-height: 21px; margin-left: 1px; letter-spacing: -0.25px; }
.brand small { font-size: 8.800px; line-height: 16px; white-space: nowrap; letter-spacing: -0.2px; }
.burger { width: 18px; height: 18px; margin-top: 4px; }
.social { display: grid; grid-template-columns: 36px 38px 32px 35px 14px; align-items: center; margin-left: 43px; margin-top: 5px; }
.social svg:nth-child(1) { width: 11px; height: 12px; margin-top: -3px; }
.social svg:nth-child(2) { width: 13px; height: 11px; }
.social svg:nth-child(3) { width: 7px; height: 11px; }
.social svg:nth-child(4) { width: 13px; height: 11px; }
.social svg:nth-child(5) { width: 14px; height: 14px; }
.apps { width: 20px; height: 20px; margin-left: 565px; }
.login, .signup { color: #fff; display: flex; align-items: center; gap: 8px; font-size: 12px; margin-top: 3px; letter-spacing: -0.1px; }
.login { margin-left: 80px; width: 92px; }
.login svg { width: 14px; height: 12px; }
.signup { margin-top: 2px; }
.signup svg { width: 16px; height: 12px; }

/* page body */
.body { height: 572px; flex: none; display: flex; background: #d0e8ef; }
.side { width: 234px; background: #fbfbfb; padding: 10px 0 0 10px; overflow: hidden; }
.btn { background: #2d8cf0; color: #fff; border-radius: 3px; height: 32px; display: flex; align-items: center; justify-content: center; }
.tour { width: 101px; margin-left: 50px; font-size: 11.500px; letter-spacing: -0.08px; padding-top: 1px; }
.zoom { display: flex; align-items: center; height: 66px; letter-spacing: -0.3px; }
.mag { width: 16px; height: 16px; margin: -4px -1px 0 4px; }
.undo { width: 14px; height: 14px; margin-left: 19px; }
.slider { width: 213px; height: 4px; background: #e8eaec; border-radius: 2px; position: relative; margin-top: 2px; }
.fill { width: 116px; height: 4px; background: #57a3f3; border-radius: 2px; }
.knob { position: absolute; left: 110px; top: -3px; width: 12px; height: 12px; border: 2px solid #57a3f3; background: #fff; border-radius: 50%; }
.opt { display: flex; align-items: center; padding: 0 25px 0 24px; }
.opt h4 { font-size: 15.500px; font-weight: 700; color: #d57e7e; letter-spacing: 0.05px; padding-bottom: 2px; }
.o1 { height: 57px; margin-top: 15px; }
.o1 h4 { letter-spacing: -0.3px; }
.o2 { height: 57px; }
.o2 h4 { letter-spacing: 0.1px; }
.o3 { height: 57px; }
.o4 { height: 50px; }
.o5 { height: 55px; }
.tag { background: #19be6b; color: #fff; border-radius: 3px; height: 22px; line-height: 23px; padding: 0 8px; margin: 5px 0 0 4px; font-size: 11.500px; letter-spacing: -0.1px; }
.dn { width: 10px; height: 6px; margin: -6px 0 0 auto; }
.dots { display: flex; margin: -1px 0 0 15px; gap: 1px; }
.dots i { width: 14px; height: 14px; border-radius: 50%; background: #000; border: 1px solid #555; box-shadow: 1px 2px 5px rgba(0,0,0,.5); }
.dots .w { background: #fff; }
.add { width: 110px; margin-top: 14px; gap: 4px; font-size: 11.500px; letter-spacing: 0; padding-top: 1px; }
.add svg { width: 11px; height: 11px; margin-top: -2px; }
.collapse { width: 102px; height: 32px; border: 1px dashed #dcdee2; display: flex; align-items: center; justify-content: center; gap: 4px; font-size: 11.500px; padding-top: 1px; }
.collapse svg { width: 6px; height: 8px; margin-top: -1px; }
.sec { height: 41px; display: flex; align-items: center; padding: 13px 23px 0 12px; color: #2d8cf0; }
.first { height: 40px; }
.sec span { flex: 1; margin-left: 9px; letter-spacing: -0.15px; padding-top: 2px; }
.ic { width: 16px; height: 16px; fill: #2d8cf0; margin-top: -3px; }
.ic.u { height: 14px; }
.tools { width: 42px; height: 12px; margin-right: 6px; }
.gi { width: 14px; height: 14px; fill: #a5a5a5; }
.tail { width: 1px; height: 10px; margin: 5px 0 0 19px; background: #e8eaec; }
.scroll { background: #f0f0f0; display: flex; flex-direction: column; align-items: center; }
.scroll svg { width: 8px; height: 6px; margin: 7px 1px 4px 0; }
.thumb { width: 15px; background: #cdcdcd; }
.s-left { width: 16px; border-right: 1px solid #fff; }
.s-left .thumb { height: 433px; }
.s-right { width: 17px; border-left: 1px solid #fff; }
.s-right .thumb { height: 318px; }

.content { width: 1099px; overflow: hidden; padding: 21px 60px 0; }
.notice { height: 54px; background: #ebf4ff; border: 1px solid #d5e8fc; display: flex; align-items: center; padding-left: 24px; position: relative; }
.fire { width: 14px; height: 24px; margin-top: 3px; }
.notice p { margin-left: 31px; white-space: nowrap; font-size: 11.500px; letter-spacing: -0.155px; padding-top: 2px; }
.notice a { color: #2d8cf0; }
.nx { position: absolute; right: 15px; top: 10px; width: 10px; height: 10px; }
.bar { display: flex; align-items: center; height: 32px; margin-top: 21px; font-family: Lato, "Open Sans", sans-serif; }
.pen { width: 14px; height: 13px; margin-top: 2px; }
.bar h2 { width: 154px; margin-left: 5px; font-size: 20px; font-weight: 700; letter-spacing: 0.6px; margin-top: -5px; }
.select { width: 185px; height: 31px; background: #fff; border: 1px solid #dcdee2; border-radius: 3px; display: flex; align-items: center; justify-content: space-between; padding: 2px 7px 0 8px; color: #c5c8ce; }
.select svg { width: 10px; height: 6px; margin-top: -3px; }
.group { display: flex; margin-left: 7px; width: 183px; height: 32px; background: #2d8cf0; color: #fff; border-radius: 16px; }
.g1, .g2 { display: flex; align-items: center; justify-content: center; }
.g1 { width: 37px; }
.g1 svg { width: 7px; height: 11px; margin-top: -1px; }
.g2 { width: 109px; border: 1px solid #2a82df; border-width: 0 1px; font-size: 12px; letter-spacing: 0.1px; }
.preview { margin-left: 6px; width: 93px; height: 32px; background: #2d8cf0; color: #fff; border-radius: 16px; display: flex; align-items: center; justify-content: center; gap: 7px; font-size: 12px; letter-spacing: 0.2px; }
.preview svg { width: 10px; height: 7px; }

/* resume sheet */
.paper { height: 500px; margin-top: 10px; background: #fff; padding: 26px 20px 0; box-shadow: 0 5px 22px rgba(0,0,0,.55); font-family: Lato, "Open Sans", sans-serif; color: #808080; }
.paper h1 { font-size: 40px; line-height: 52px; text-align: center; letter-spacing: 1.1px; }
.paper h3 { font-size: 28px; line-height: 26px; text-align: center; font-weight: 600; letter-spacing: 0.35px; }
.contacts { display: grid; grid-template-columns: 213px 243px 203px 190px; padding-left: 45px; margin-top: 10px; height: 24px; align-items: center; font-size: 16px; letter-spacing: 0.2px; }
.contacts span { display: flex; align-items: center; gap: 4px; }
.contacts span svg { margin-top: 1px; }
.c1 svg { width: 9px; height: 14px; }
.c2 svg { width: 16px; height: 13px; }
.c3 svg { width: 13px; height: 13px; }
.c4 svg { width: 14px; height: 14px; }
.c1 { letter-spacing: 0.3px; }
.c3 { letter-spacing: 0.35px; }
.c4 { letter-spacing: 0.1px; }
.head { height: 45px; background: #e6e6e6; border-radius: 2px; margin-top: 20px; padding-left: 11px; display: flex; align-items: center; color: #000; font-size: 28px; font-weight: 600; }
.txt + .head { margin-top: 10px; }
.head span { margin-left: 8px; padding-bottom: 2px; }
.head .k1 { margin-left: 9px; letter-spacing: -0.2px; }
.head .k2 { margin-left: 7px; letter-spacing: 0.3px; }
.head .k3 { margin-left: 7px; letter-spacing: 0.2px; padding-bottom: 1px; }
.head.last { height: 44px; margin-top: 11px; }
.txt + .head.last { margin-top: 11px; }
.hi { width: 28px; height: 28px; margin: 2px -4px 0 -2px; }
.list { width: 27px; height: 22px; margin-top: 2px; }
.case { width: 27px; height: 24px; margin-top: -2px; }
.txt { padding: 9px 0 0 10px; font-size: 16px; line-height: 24px; letter-spacing: 0.17px; }
.txt span { display: block; }

/* floating controls */
.totop { position: absolute; left: 1321px; top: 598px; width: 14px; height: 18px; }
.chat { position: absolute; left: 1314px; top: 631px; width: 32px; height: 32px; border-radius: 50%; background: #2d8cf0; }
.chat svg { width: 12px; height: 8px; margin: 13px 0 0 10px; }
.viewer { position: absolute; left: 1341px; top: 625px; width: 25px; height: 52px; }

/* taskbar */
.taskbar { height: 40px; flex: none; background: #101010; display: flex; color: #fff; }
.tk { width: 48px; height: 40px; display: flex; align-items: center; justify-content: center; position: relative; margin-right: 1px; border: solid transparent; border-width: 2px 0; }
.tk:nth-child(-n+3) { margin-right: 0; }
.tw { width: 52px; margin: 0; padding-right: 0; }
.run { border-bottom: 0; padding-bottom: 2px; }
.run::after { content: ""; position: absolute; left: 4px; right: 4px; bottom: 0; height: 2px; background: #76b9ed; }
.on { background: #333; border-top-color: #333; }
.on::after { left: 0; right: 0; }
.skype { margin: 3px 0 0 6px; }
.cnt { position: absolute; width: 16px; height: 16px; border-radius: 50%; border: 1px solid #888; background: rgba(32,32,34,.85); font: 600 12px/14px "Open Sans", sans-serif; text-align: center; }
.c-sk { left: 28px; top: 17px; }
.tray { margin-left: auto; display: flex; align-items: center; width: 282px; }
.tray > svg { width: 124px; height: 20px; }
.lang { margin-left: 10px; letter-spacing: -0.4px; width: 24px; }
.clock { width: 62px; margin-left: 8px; line-height: 18px; text-align: center; font-size: 11.500px; letter-spacing: -0.05px; display: flex; flex-direction: column; padding-bottom: 1px; }
.act { position: relative; margin-left: 13px; }
.act svg { width: 16px; height: 17px; }
.c-ac { left: 7px; top: 7px; }
.peek { width: 1px; height: 40px; background: #5b5b5b; margin: 0 4px 0 auto; }
```
